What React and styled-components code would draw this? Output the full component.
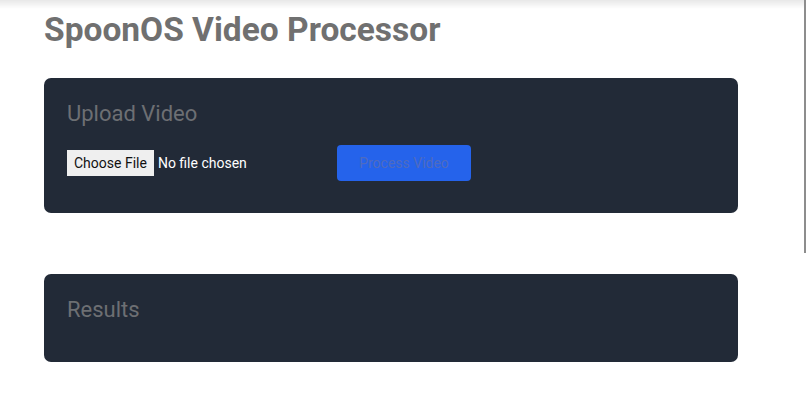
import styled, { createGlobalStyle } from "styled-components";

const GlobalStyle = createGlobalStyle`
  html, body {
    margin: 0;
    padding: 0;
    background: #ffffff;
    font-family: Roboto, "Liberation Sans", Arial, sans-serif;
    overflow: hidden;
  }
`;

const Page = styled.main`
  width: 694px;
  padding: 11px 0 0 44px;
`;

const TopShade = styled.div`
  position: fixed;
  top: 0;
  left: 0;
  right: 0;
  height: 9px;
  background: linear-gradient(to bottom, rgba(0, 0, 0, 0.09), rgba(0, 0, 0, 0));
  pointer-events: none;
`;

const ScrollThumb = styled.div`
  position: fixed;
  top: 0;
  right: 0;
  width: 2px;
  height: 253px;
  background: #8d8d8d;
`;

const Title = styled.h1`
  margin: 0 0 30px 0;
  font-size: 33.5px;
  line-height: 37px;
  font-weight: 700;
  color: #707070;
`;

const Card = styled.section`
  background: #222a37;
  border-radius: 7px;
  padding: 24px 23px ${(p) => p.$bottom || 24}px;
  margin-bottom: ${(p) => p.$gap || 0}px;
`;

const CardTitle = styled.h2`
  margin: 0 0 16px 0;
  font-size: 22px;
  line-height: 24px;
  font-weight: 400;
  color: #6d6f73;
`;

const Row = styled.div`
  display: flex;
  align-items: center;
  gap: 16px;
  height: 42px;
`;

const FileInput = styled.input`
  width: 254px;
  color: #ffffff;
  font-family: Roboto, "Liberation Sans", Arial, sans-serif;
  font-size: 14px;

  &::file-selector-button {
    background: #efefef;
    border: none;
    border-radius: 0;
    color: #111111;
    font-family: Roboto, "Liberation Sans", Arial, sans-serif;
    font-size: 14px;
    height: 26px;
    padding: 0 7px;
    margin-right: 4px;
  }
`;

const ProcessButton = styled.button`
  width: 134px;
  height: 36px;
  border: none;
  border-radius: 4px;
  background: #2563eb;
  color: #4e6bbf;
  font-family: Roboto, "Liberation Sans", Arial, sans-serif;
  font-size: 14px;
  cursor: not-allowed;
`;

export default function App() {
  return (
    <>
      <GlobalStyle />
      <TopShade />
      <ScrollThumb />
      <Page>
        <Title>SpoonOS Video Processor</Title>

        <Card $bottom={29} $gap={61}>
          <CardTitle>Upload Video</CardTitle>
          <Row>
            <FileInput type="file" accept="video/*" />
            <ProcessButton disabled>Process Video</ProcessButton>
          </Row>
        </Card>

        <Card>
          <CardTitle>Results</CardTitle>
        </Card>
      </Page>
    </>
  );
}
